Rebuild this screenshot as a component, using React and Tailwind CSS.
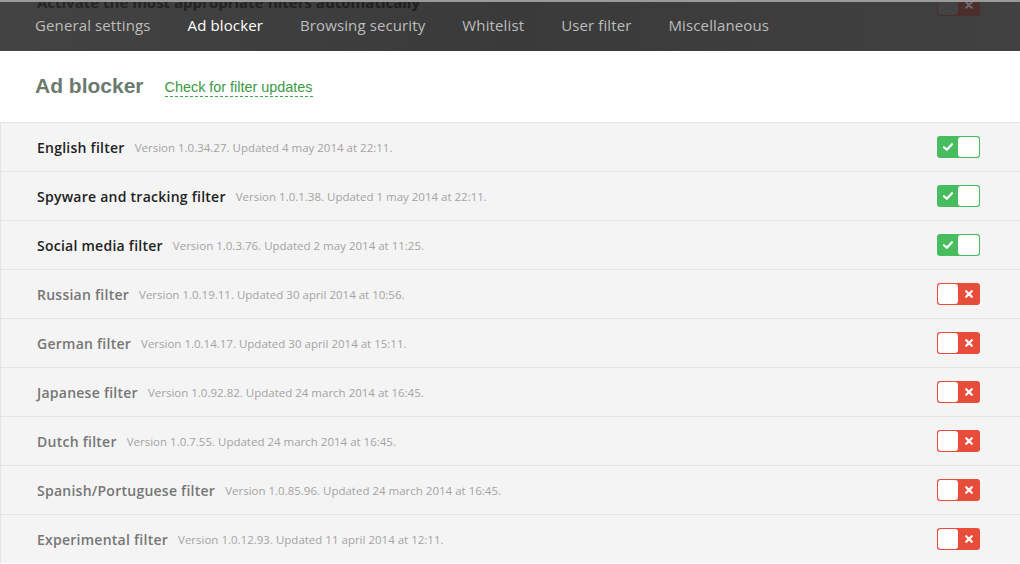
import React from "react";

const filters = [
  { name: "English filter", info: "Version 1.0.34.27. Updated 4 may 2014 at 22:11.", on: true },
  { name: "Spyware and tracking filter", info: "Version 1.0.1.38. Updated 1 may 2014 at 22:11.", on: true },
  { name: "Social media filter", info: "Version 1.0.3.76. Updated 2 may 2014 at 11:25.", on: true },
  { name: "Russian filter", info: "Version 1.0.19.11. Updated 30 april 2014 at 10:56.", on: false },
  { name: "German filter", info: "Version 1.0.14.17. Updated 30 april 2014 at 15:11.", on: false },
  { name: "Japanese filter", info: "Version 1.0.92.82. Updated 24 march 2014 at 16:45.", on: false },
  { name: "Dutch filter", info: "Version 1.0.7.55. Updated 24 march 2014 at 16:45.", on: false },
  { name: "Spanish/Portuguese filter", info: "Version 1.0.85.96. Updated 24 march 2014 at 16:45.", on: false },
  { name: "Experimental filter", info: "Version 1.0.12.93. Updated 11 april 2014 at 12:11.", on: false },
];

function Toggle({ on }) {
  if (on) {
    return (
      <div className="flex h-[22px] w-[43px] rounded-[3px] bg-[#48bd5f] p-px">
        <div className="flex w-[20px] items-center justify-center">
          <svg width="10" height="8" viewBox="0 0 10 8">
            <path d="M1 4.2 L3.8 6.8 L9 1.2" stroke="#fff" strokeWidth="2.2" fill="none" strokeLinecap="round" strokeLinejoin="round" />
          </svg>
        </div>
        <div className="flex-1 rounded-[3px] bg-white" />
      </div>
    );
  }
  return (
    <div className="flex h-[22px] w-[43px] rounded-[3px] bg-[#e84d3b] p-px">
      <div className="w-[20px] rounded-[3px] bg-white" />
      <div className="flex flex-1 items-center justify-center">
        <svg width="8" height="8" viewBox="0 0 8 8">
          <path d="M1.2 1.2 L6.8 6.8 M6.8 1.2 L1.2 6.8" stroke="#fff" strokeWidth="2.2" strokeLinecap="round" />
        </svg>
      </div>
    </div>
  );
}

export default function App() {
  const tabs = ["General settings", "Ad blocker", "Browsing security", "Whitelist", "User filter", "Miscellaneous"];
  return (
    <div className="h-[564px] w-[1020px] overflow-hidden bg-white" style={{ fontFamily: '"Open Sans", "Liberation Sans", sans-serif' }}>
      <div className="relative h-[51px] overflow-hidden border-t-2 border-[#9a9a9a] bg-[#3d3d3d]">
        <div className="absolute left-[37px] top-[-11px] text-[15px] font-bold text-[#1f1f1f]">Activate the most appropriate filters automatically</div>
        <div className="absolute left-[937px] top-[-8px] flex h-[22px] w-[43px] rounded-[3px] bg-[#4a2a28] p-px">
          <div className="w-[20px] rounded-[3px] bg-[#404040]" />
          <div className="flex flex-1 items-center justify-center">
            <svg width="8" height="8" viewBox="0 0 8 8">
              <path d="M1.2 1.2 L6.8 6.8 M6.8 1.2 L1.2 6.8" stroke="#6a6a6a" strokeWidth="2" strokeLinecap="round" />
            </svg>
          </div>
        </div>
        <div className="absolute inset-0 bg-[linear-gradient(90deg,rgba(255,255,255,0.03),rgba(0,0,0,0.05),rgba(255,255,255,0.02))]" />
        <div className="relative flex h-full items-center gap-[37px] pl-[35px] pb-[3px] text-[15px] tracking-[0.12px]">
          {tabs.map((t) => (
            <span key={t} className={t === "Ad blocker" ? "text-white" : "text-[#bdbdbd]"}>
              {t}
            </span>
          ))}
        </div>
      </div>
      <div className="flex h-[71px] items-center pl-[35px] pb-[2px]" style={{ fontFamily: '"Liberation Sans", Arial, sans-serif' }}>
        <h1 className="text-[21px] font-bold text-[#6a7a6e]">Ad blocker</h1>
        <span className="ml-[21px] mt-[4px] border-b border-dashed border-[#3fa34d] text-[14.4px] leading-[17px] text-[#3a9a46]">Check for filter updates</span>
      </div>
      <div className="border-l border-[#e3e3e3]">
        {filters.map((f) => (
          <div key={f.name} className="flex h-[49px] items-center border-t border-[#e3e3e3] bg-[#f4f4f4] pl-[36px] pr-[40px]">
            <span className={`text-[14px] font-semibold tracking-[0.25px] ${f.on ? "text-[#222]" : "text-[#767676]"}`}>{f.name}</span>
            <span className="ml-[10px] mt-[2px] text-[11.5px] text-[#a3a3a3]">{f.info}</span>
            <div className="ml-auto">
              <Toggle on={f.on} />
            </div>
          </div>
        ))}
      </div>
    </div>
  );
}
